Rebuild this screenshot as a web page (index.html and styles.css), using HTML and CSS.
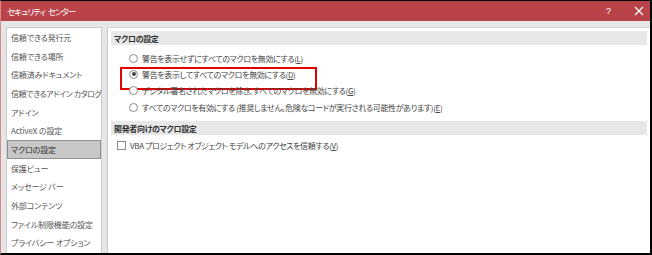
FILE: index.html
```html
<!DOCTYPE html>
<html lang="ja">
<head>
<meta charset="utf-8">
<title>セキュリティ センター</title>
<link rel="stylesheet" href="styles.css">
</head>
<body>
<div class="window">
  <header class="titlebar">
    <span class="title">セキュリティ センター</span>
    <span class="controls">
      <span class="help">?</span>
      <span class="close">
        <svg width="10" height="10" viewBox="0 0 10 10"><path d="M1 1 L9 9 M9 1 L1 9" stroke="#fff" stroke-width="1.2" fill="none"/></svg>
      </span>
    </span>
  </header>
  <div class="body">
    <nav class="sidebar">
      <div class="nav-item">信頼できる発行元</div>
      <div class="nav-item">信頼できる場所</div>
      <div class="nav-item">信頼済みドキュメント</div>
      <div class="nav-item tight">信頼できるアドイン カタログ</div>
      <div class="nav-item">アドイン</div>
      <div class="nav-item">ActiveX の設定</div>
      <div class="nav-item selected">マクロの設定</div>
      <div class="nav-item">保護ビュー</div>
      <div class="nav-item">メッセージ バー</div>
      <div class="nav-item">外部コンテンツ</div>
      <div class="nav-item">ファイル制限機能の設定</div>
      <div class="nav-item">プライバシー オプション</div>
    </nav>
    <main class="content">
      <section class="section">
        <h2 class="section-head">マクロの設定</h2>
        <div class="options">
          <div class="option"><span class="radio"></span><span>警告を表示せずにすべてのマクロを無効にする(<u>L</u>)</span></div>
          <div class="option highlighted"><span class="radio checked"></span><span>警告を表示してすべてのマクロを無効にする(<u>D</u>)</span></div>
          <div class="option"><span class="radio"></span><span>デジタル署名されたマクロを除き、すべてのマクロを無効にする(<u>G</u>)</span></div>
          <div class="option"><span class="radio"></span><span>すべてのマクロを有効にする (推奨しません。危険なコードが実行される可能性があります)(<u>E</u>)</span></div>
        </div>
      </section>
      <section class="section">
        <h2 class="section-head second">開発者向けのマクロ設定</h2>
        <div class="checks">
          <div class="option"><span class="checkbox"></span><span>VBA プロジェクト オブジェクト モデルへのアクセスを信頼する(<u>V</u>)</span></div>
        </div>
      </section>
    </main>
  </div>
</div>
</body>
</html>
```
FILE: styles.css
```css
* { box-sizing: border-box; }
html, body { margin: 0; padding: 0; background: #fff; }
body {
  font-family: "Noto Sans CJK JP", "Noto Sans", sans-serif;
  font-feature-settings: "palt";
}
.window {
  width: 652px;
  height: 255px;
  display: flex;
  flex-direction: column;
  border-top: 1px solid #000;
  border-right: 2px solid #000;
  border-bottom: 2px solid #000;
  border-left: 1px solid #d48a8e;
  overflow: hidden;
}
.titlebar {
  height: 20px;
  flex: none;
  background: #b94349;
  color: #fff;
  display: flex;
  align-items: center;
  justify-content: space-between;
  padding-left: 6px;
}
.title { font-size: 8.5px; letter-spacing: -1px; word-spacing: 2px; }
.controls { display: flex; align-items: center; }
.help { font-size: 9px; margin-right: 23px; font-family: "Liberation Sans", sans-serif; }
.close { width: 10px; height: 10px; margin-right: 6px; display: flex; }
.body {
  flex: 1;
  display: flex;
  gap: 5px;
  background: #e6e6e6;
  padding: 6px 0 0 5px;
  min-height: 0;
}
.sidebar {
  width: 96px;
  flex: none;
  background: #fff;
  border: 1px solid #cdcdcd;
  border-bottom: none;
  display: flex;
  flex-direction: column;
}
.nav-item {
  height: 18.7px;
  flex: none;
  display: flex;
  align-items: center;
  padding-left: 3px;
  border: 1px solid transparent;
  font-size: 8px;
  letter-spacing: -0.15px;
  color: #555;
  white-space: nowrap;
}
.nav-item.tight { letter-spacing: -0.45px; }
.nav-item.selected {
  background: #c8c8c8;
  border-color: #8f8f8f;
  color: #333;
}
.content {
  flex: 1;
  background: #fff;
  border-left: 1px solid #c9c9c9;
  border-top: 1px solid #d6d6d6;
  padding: 3px 3px 0 3px;
  font-size: 8px;
  letter-spacing: -0.35px;
  color: #444;
}
.section-head {
  margin: 0;
  height: 14px;
  background: #e8e8e8;
  font-size: 8px;
  font-weight: bold;
  color: #333;
  display: flex;
  align-items: center;
  padding-left: 3px;
}
.options { margin-top: 5px; padding-left: 18px; margin-bottom: 6px; }
.checks { margin-top: 2px; padding-left: 6px; }
.option {
  height: 16.3px;
  display: flex;
  align-items: center;
  white-space: nowrap;
  position: relative;
}
.radio {
  width: 9px;
  height: 9px;
  border: 1px solid #8a8a8a;
  border-radius: 50%;
  background: #fff;
  margin-right: 4px;
  flex: none;
  display: flex;
  align-items: center;
  justify-content: center;
}
.radio.checked::before {
  content: "";
  width: 4px;
  height: 4px;
  border-radius: 50%;
  background: #444;
}
.checkbox {
  width: 9px;
  height: 9px;
  border: 1px solid #8a8a8a;
  background: #fff;
  margin-right: 4px;
  flex: none;
}
.highlighted::after {
  content: "";
  position: absolute;
  left: -9px;
  top: 1px;
  width: 193px;
  height: 19px;
  border: 2px solid #e50000;
}
u { text-decoration: underline; text-underline-offset: 1px; }
```
